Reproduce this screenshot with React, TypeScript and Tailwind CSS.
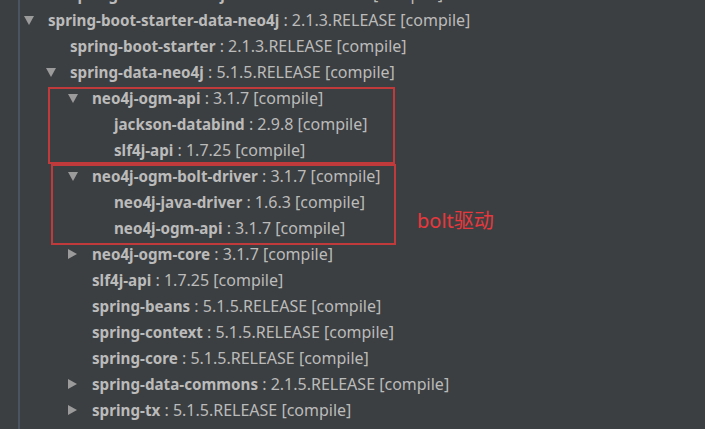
import React from 'react';

type Dep = {
  name: string;
  version: string;
  level: number;
  toggle?: 'open' | 'closed';
};

const deps: Dep[] = [
  { name: 'spring-boot-starter-json', version: '2.1.3.RELEASE', level: 1 },
  { name: 'spring-boot-starter-data-neo4j', version: '2.1.3.RELEASE', level: 0, toggle: 'open' },
  { name: 'spring-boot-starter', version: '2.1.3.RELEASE', level: 1 },
  { name: 'spring-data-neo4j', version: '5.1.5.RELEASE', level: 1, toggle: 'open' },
  { name: 'neo4j-ogm-api', version: '3.1.7', level: 2, toggle: 'open' },
  { name: 'jackson-databind', version: '2.9.8', level: 3 },
  { name: 'slf4j-api', version: '1.7.25', level: 3 },
  { name: 'neo4j-ogm-bolt-driver', version: '3.1.7', level: 2, toggle: 'open' },
  { name: 'neo4j-java-driver', version: '1.6.3', level: 3 },
  { name: 'neo4j-ogm-api', version: '3.1.7', level: 3 },
  { name: 'neo4j-ogm-core', version: '3.1.7', level: 2, toggle: 'closed' },
  { name: 'slf4j-api', version: '1.7.25', level: 2 },
  { name: 'spring-beans', version: '5.1.5.RELEASE', level: 2 },
  { name: 'spring-context', version: '5.1.5.RELEASE', level: 2 },
  { name: 'spring-core', version: '5.1.5.RELEASE', level: 2 },
  { name: 'spring-data-commons', version: '2.1.5.RELEASE', level: 2, toggle: 'closed' },
  { name: 'spring-tx', version: '5.1.5.RELEASE', level: 2, toggle: 'closed' },
];

// indent per tree level, measured from the guide line
const pad = ['pl-[4px]', 'pl-[26px]', 'pl-[48px]', 'pl-[70px]'];

function Arrow({ dir }: { dir: 'open' | 'closed' }) {
  return dir === 'open' ? (
    <svg width="10" height="9" viewBox="0 0 10 9" className="fill-[#9b9b9b]">
      <path d="M0 0h10L5 9z" />
    </svg>
  ) : (
    <svg width="9" height="10" viewBox="0 0 9 10" className="fill-[#9b9b9b]">
      <path d="M0 0v10l9-5z" />
    </svg>
  );
}

function Row({ dep }: { dep: Dep }) {
  return (
    <div className={`flex h-[26px] items-center ${pad[dep.level]}`}>
      <span className="flex w-[24px] shrink-0 items-center">
        {dep.toggle && <Arrow dir={dep.toggle} />}
      </span>
      <span className="whitespace-nowrap text-[#bbbbbb]">
        <b className="text-[15.2px] font-bold">{dep.name}</b>
        <span className="text-[16px]"> : {dep.version} [compile]</span>
      </span>
    </div>
  );
}

export default function App() {
  return (
    <div
      className="relative flex h-[429px] w-[705px] overflow-hidden bg-[#3c3f41] pl-[18px]"
      style={{ fontFamily: '"Noto Sans", "Noto Sans CJK SC", sans-serif' }}
    >
      <div className="flex h-full flex-1 flex-col border-l-2 border-[#4a5561]">
        <div className="mt-[-19px] flex flex-col">
          {deps.map((d, i) => (
            <Row key={i} dep={d} />
          ))}
        </div>
      </div>

      {/* annotation boxes drawn over the tree */}
      <div className="absolute left-[48px] top-[87px] h-[77px] w-[347px] border-2 border-[#c0393b]" />
      <div className="absolute left-[51px] top-[164px] h-[81px] w-[345px] border-2 border-[#c0393b]" />
      <div className="absolute left-[417px] top-[207px] text-[20px] leading-[28px] text-[#e8383d]">bolt驱动</div>
    </div>
  );
}
